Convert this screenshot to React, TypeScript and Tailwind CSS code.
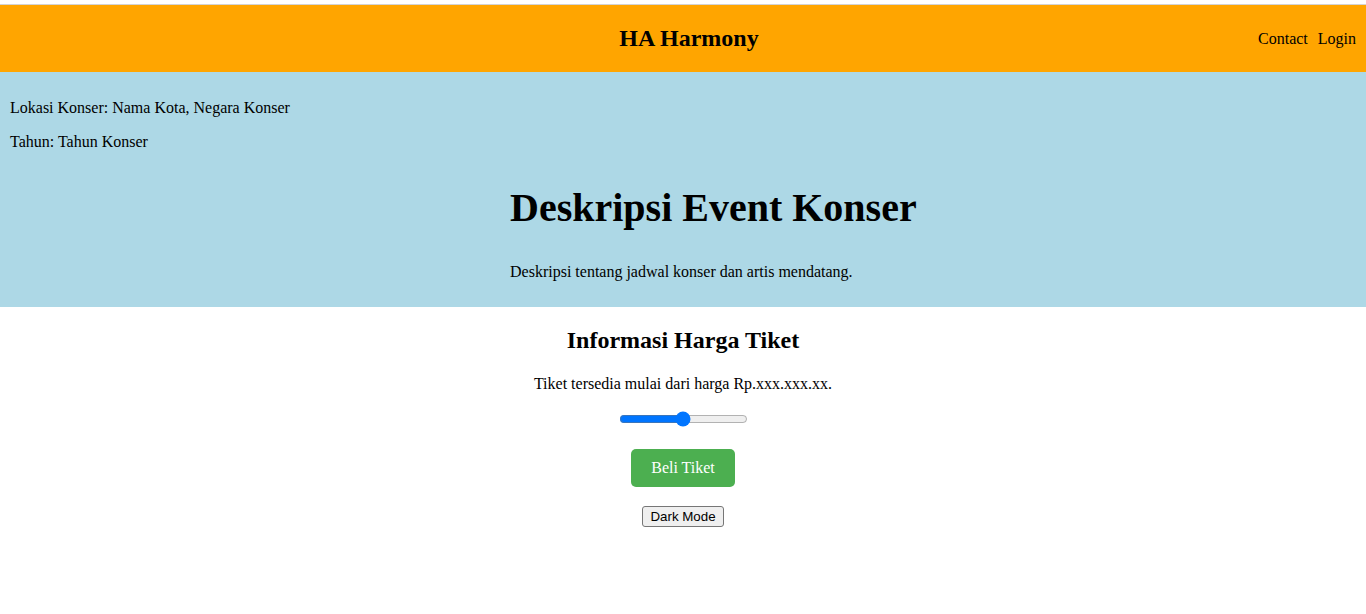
import { useState } from "react";

const serif = "font-['Liberation_Serif','Times_New_Roman',serif]";

function Header() {
  return (
    <header className="flex h-[67px] items-center bg-[#ffa500] px-[10px]">
      <h1 className="flex-1 pl-[110px] text-center text-[24px] font-bold">HA Harmony</h1>
      <nav className="flex gap-[10px] text-[16px]">
        <a href="#contact">Contact</a>
        <a href="#login">Login</a>
      </nav>
    </header>
  );
}

function EventInfo() {
  return (
    <section className="bg-[#add8e6] px-[10px] pt-[27px] pb-[26px]">
      <p>Lokasi Konser: Nama Kota, Negara Konser</p>
      <p className="mt-[16px]">Tahun: Tahun Konser</p>
      <div className="pl-[500px]">
        <h2 className="mt-[33px] text-[40px] font-bold">Deskripsi Event Konser</h2>
        <p className="mt-[32px]">Deskripsi tentang jadwal konser dan artis mendatang.</p>
      </div>
    </section>
  );
}

function Tickets() {
  const [price, setPrice] = useState(50);
  const [dark, setDark] = useState(false);

  return (
    <section className="flex flex-col items-center">
      <h2 className="mt-[20px] text-[24px] font-bold">Informasi Harga Tiket</h2>
      <p className="mt-[21px]">Tiket tersedia mulai dari harga Rp.xxx.xxx.xx.</p>
      <input
        type="range"
        min={0}
        max={100}
        value={price}
        onChange={(e) => setPrice(Number(e.target.value))}
        className="mt-[18px]"
      />
      <button
        type="button"
        className="mt-[22px] rounded-[5px] bg-[#4caf50] px-[20px] py-[10px] text-[16px] text-white"
      >
        Beli Tiket
      </button>
      <button
        type="button"
        onClick={() => setDark((v) => !v)}
        className="mt-[19px] rounded-[3px] border border-[#767676] bg-[#efefef] px-[7px] py-[2px] font-['Liberation_Sans',Arial,sans-serif] text-[13.333px] text-black"
      >
        {dark ? "Light Mode" : "Dark Mode"}
      </button>
    </section>
  );
}

export default function App() {
  return (
    <div className={`${serif} min-h-[614px] bg-white text-[16px] leading-[normal] text-black`}>
      <div className="h-[5px] border-b border-[#d3d3d3]" />
      <Header />
      <EventInfo />
      <Tickets />
    </div>
  );
}
